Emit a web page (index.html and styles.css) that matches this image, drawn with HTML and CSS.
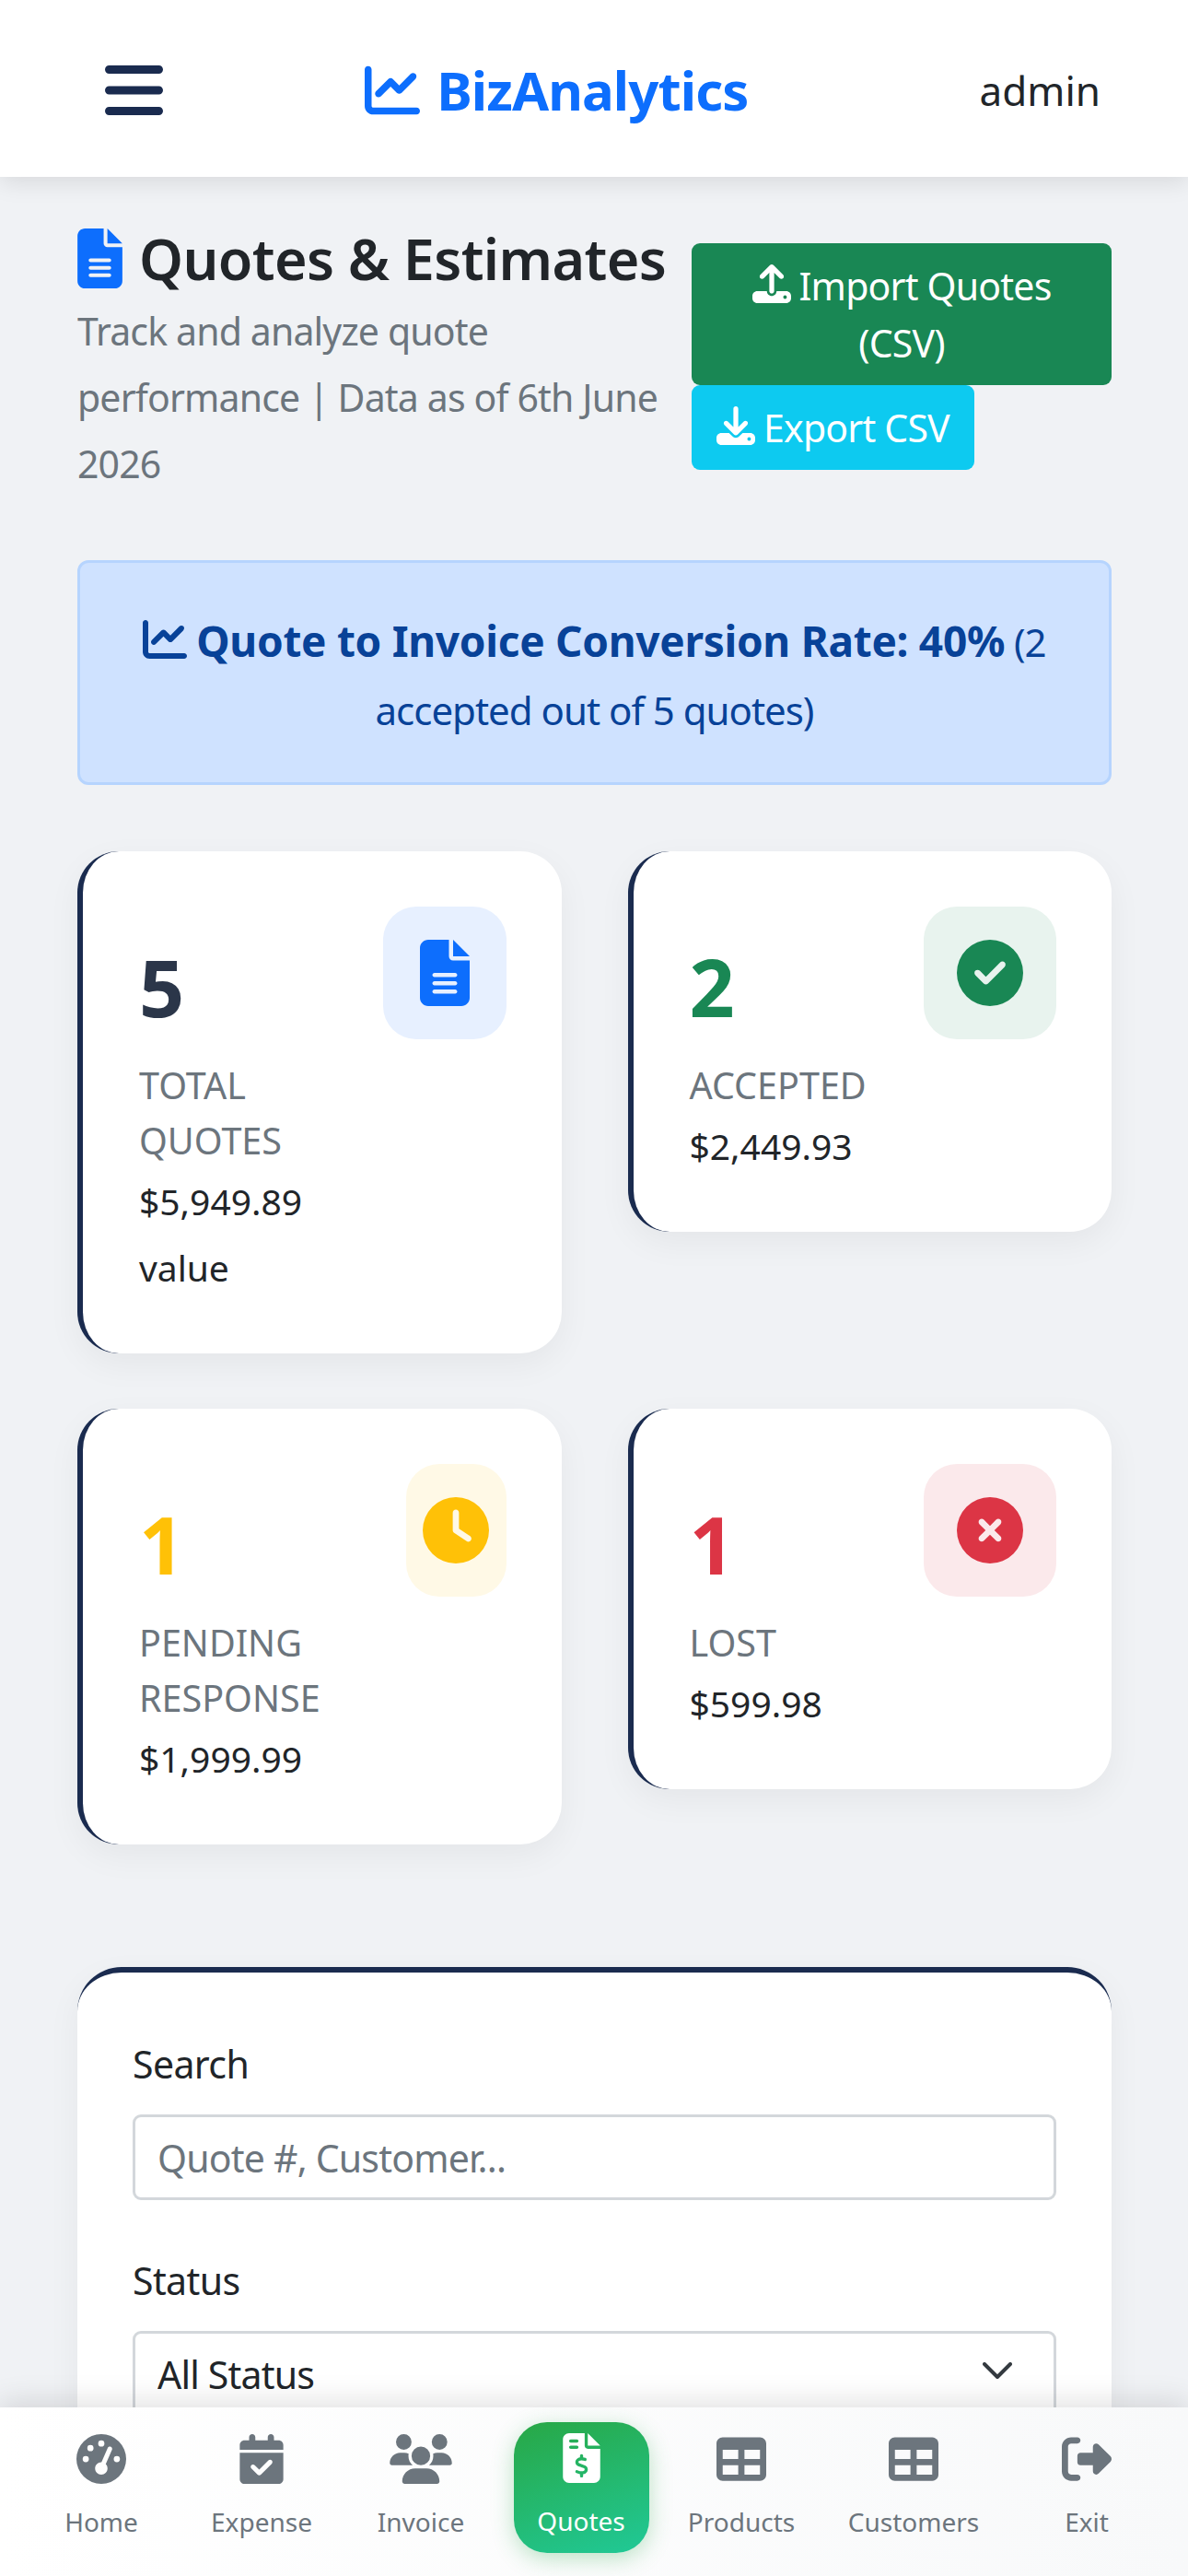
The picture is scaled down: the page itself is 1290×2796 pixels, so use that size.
FILE: index.html
```html
<!DOCTYPE html>
<html lang="en">
<head>
  <meta charset="UTF-8" />
  <meta name="viewport" content="width=device-width, initial-scale=1.0"/>
  <title>Quotes &amp; Estimates - BizAnalytics</title>
  <link rel="stylesheet" href="styles.css">
</head>
<body>
  <svg class="icon-defs" aria-hidden="true">
    <symbol id="i-bars" viewBox="0 0 448 512"><path d="M0 96C0 78.3 14.3 64 32 64H416c17.7 0 32 14.3 32 32s-14.3 32-32 32H32C14.3 128 0 113.7 0 96zM0 256c0-17.7 14.3-32 32-32H416c17.7 0 32 14.3 32 32s-14.3 32-32 32H32c-17.7 0-32-14.3-32-32zM448 416c0 17.7-14.3 32-32 32H32c-17.7 0-32-14.3-32-32s14.3-32 32-32H416c17.7 0 32 14.3 32 32z"/></symbol>
    <symbol id="i-chart" viewBox="0 0 512 512"><path d="M64 64c0-17.7-14.3-32-32-32S0 46.3 0 64V400c0 44.2 35.8 80 80 80H480c17.7 0 32-14.3 32-32s-14.3-32-32-32H80c-8.8 0-16-7.2-16-16V64zm406.6 86.6c12.5-12.5 12.5-32.8 0-45.3s-32.8-12.5-45.3 0L320 210.7l-57.4-57.4c-12.5-12.5-32.8-12.5-45.3 0l-112 112c-12.5 12.5-12.5 32.8 0 45.3s32.8 12.5 45.3 0L240 221.3l57.4 57.4c12.5 12.5 32.8 12.5 45.3 0l128-128z"/></symbol>
    <symbol id="i-file" viewBox="0 0 384 512"><path d="M64 0C28.7 0 0 28.7 0 64V448c0 35.3 28.7 64 64 64H320c35.3 0 64-28.7 64-64V160H256c-17.7 0-32-14.3-32-32V0H64zM256 0V128H384L256 0zM112 256H272c8.8 0 16 7.2 16 16s-7.2 16-16 16H112c-8.8 0-16-7.2-16-16s7.2-16 16-16zm0 64H272c8.8 0 16 7.2 16 16s-7.2 16-16 16H112c-8.8 0-16-7.2-16-16s7.2-16 16-16zm0 64H272c8.8 0 16 7.2 16 16s-7.2 16-16 16H112c-8.8 0-16-7.2-16-16s7.2-16 16-16z"/></symbol>
    <symbol id="i-upload" viewBox="0 0 512 512"><path d="M288 109.3V352c0 17.7-14.3 32-32 32s-32-14.3-32-32V109.3l-73.4 73.4c-12.5 12.5-32.8 12.5-45.3 0s-12.5-32.8 0-45.3l128-128c12.5-12.5 32.8-12.5 45.3 0l128 128c12.5 12.5 12.5 32.8 0 45.3s-32.8 12.5-45.3 0L288 109.3zM64 352H192c0 35.3 28.7 64 64 64s64-28.7 64-64H448c35.3 0 64 28.7 64 64v32c0 35.3-28.7 64-64 64H64c-35.3 0-64-28.7-64-64V416c0-35.3 28.7-64 64-64zM432 456a24 24 0 1 0 0-48 24 24 0 1 0 0 48z"/></symbol>
    <symbol id="i-download" viewBox="0 0 512 512"><path d="M288 32c0-17.7-14.3-32-32-32s-32 14.3-32 32V274.7l-73.4-73.4c-12.5-12.5-32.8-12.5-45.3 0s-12.5 32.8 0 45.3l128 128c12.5 12.5 32.8 12.5 45.3 0l128-128c12.5-12.5 12.5-32.8 0-45.3s-32.8-12.5-45.3 0L288 274.7V32zM64 352c-35.3 0-64 28.7-64 64v32c0 35.3 28.7 64 64 64H448c35.3 0 64-28.7 64-64V416c0-35.3-28.7-64-64-64H346.5l-45.3 45.3c-25 25-65.5 25-90.5 0L165.5 352H64zm368 56a24 24 0 1 1 0 48 24 24 0 1 1 0-48z"/></symbol>
    <symbol id="i-check" viewBox="0 0 512 512"><path d="M256 512A256 256 0 1 0 256 0a256 256 0 1 0 0 512zM369 209L241 337c-9.4 9.4-24.6 9.4-33.9 0l-64-64c-9.4-9.4-9.4-24.6 0-33.9s24.6-9.4 33.9 0l47 47L335 175c9.4-9.4 24.6-9.4 33.9 0s9.4 24.6 0 33.9z"/></symbol>
    <symbol id="i-clock" viewBox="0 0 512 512"><path d="M256 0a256 256 0 1 1 0 512A256 256 0 1 1 256 0zM232 120V256c0 8 4 15.5 10.7 20l96 64c11 7.4 25.9 4.4 33.3-6.7s4.4-25.9-6.7-33.3L280 243.2V120c0-13.3-10.7-24-24-24s-24 10.7-24 24z"/></symbol>
    <symbol id="i-xmark" viewBox="0 0 512 512"><path d="M256 512A256 256 0 1 0 256 0a256 256 0 1 0 0 512zM175 175c9.4-9.4 24.6-9.4 33.9 0l47 47 47-47c9.4-9.4 24.6-9.4 33.9 0s9.4 24.6 0 33.9l-47 47 47 47c9.4 9.4 9.4 24.6 0 33.9s-24.6 9.4-33.9 0l-47-47-47 47c-9.4 9.4-24.6 9.4-33.9 0s-9.4-24.6 0-33.9l47-47-47-47c-9.4-9.4-9.4-24.6 0-33.9z"/></symbol>
    <symbol id="i-gauge" viewBox="0 0 512 512"><path d="M0 256a256 256 0 1 1 512 0A256 256 0 1 1 0 256zM288 96a32 32 0 1 0 -64 0 32 32 0 1 0 64 0zM256 416c35.3 0 64-28.7 64-64c0-17.4-6.9-33.1-18.1-44.6L366 161.7c5.3-12.1-.2-26.3-12.3-31.6s-26.3 .2-31.6 12.3L257.9 288c-.6 0-1.3 0-1.9 0c-35.3 0-64 28.7-64 64s28.7 64 64 64zM176 144a32 32 0 1 0 -64 0 32 32 0 1 0 64 0zM96 288a32 32 0 1 0 0-64 32 32 0 1 0 0 64zm352-32a32 32 0 1 0 -64 0 32 32 0 1 0 64 0z"/></symbol>
    <symbol id="i-calendar" viewBox="0 0 448 512"><path d="M128 0c17.7 0 32 14.3 32 32V64H288V32c0-17.7 14.3-32 32-32s32 14.3 32 32V64h48c26.5 0 48 21.5 48 48v48H0V112C0 85.5 21.5 64 48 64H96V32c0-17.7 14.3-32 32-32zM0 192H448V464c0 26.5-21.5 48-48 48H48c-26.5 0-48-21.5-48-48V192zM329 305c9.4-9.4 9.4-24.6 0-33.9s-24.6-9.4-33.9 0l-95 95-47-47c-9.4-9.4-24.6-9.4-33.9 0s-9.4 24.6 0 33.9l64 64c9.4 9.4 24.6 9.4 33.9 0L329 305z"/></symbol>
    <symbol id="i-users" viewBox="0 0 640 512"><path d="M144 0a80 80 0 1 1 0 160A80 80 0 1 1 144 0zM512 0a80 80 0 1 1 0 160A80 80 0 1 1 512 0zM0 298.7C0 239.8 47.8 192 106.7 192h42.7c15.9 0 31 3.5 44.6 9.7c-1.3 7.2-1.9 14.7-1.9 22.3c0 38.2 16.8 72.5 43.3 96c-.2 0-.4 0-.7 0H21.3C9.6 320 0 310.4 0 298.7zM405.3 320c-.2 0-.4 0-.7 0c26.6-23.5 43.3-57.8 43.3-96c0-7.6-.7-15-1.9-22.3c13.6-6.3 28.7-9.7 44.6-9.7h42.7C592.2 192 640 239.8 640 298.7c0 11.8-9.6 21.3-21.3 21.3H405.3zM224 224a96 96 0 1 1 192 0 96 96 0 1 1 -192 0zM128 485.3C128 411.7 187.7 352 261.3 352H378.7C452.3 352 512 411.7 512 485.3c0 14.7-11.9 26.7-26.7 26.7H154.7c-14.7 0-26.7-11.9-26.7-26.7z"/></symbol>
    <symbol id="i-invoice" viewBox="0 0 384 512"><path d="M64 0C28.7 0 0 28.7 0 64V448c0 35.3 28.7 64 64 64H320c35.3 0 64-28.7 64-64V160H256c-17.7 0-32-14.3-32-32V0H64zM256 0V128H384L256 0zM64 80c0-8.8 7.2-16 16-16h64c8.8 0 16 7.2 16 16s-7.2 16-16 16H80c-8.8 0-16-7.2-16-16zm0 64c0-8.8 7.2-16 16-16h64c8.8 0 16 7.2 16 16s-7.2 16-16 16H80c-8.8 0-16-7.2-16-16zm128 72c8.8 0 16 7.2 16 16v17.3c8.5 1.2 16.7 3.1 24.1 5.1c8.5 2.3 13.6 11 11.3 19.6s-11 13.6-19.6 11.3c-11.1-3-22-5.2-32.1-5.3c-8.4-.1-17.4 1.8-23.6 5.5c-5.7 3.4-8.1 7.3-8.1 12.8c0 3.7 1.3 6.5 7.3 10.1c6.9 4.1 16.6 7.1 29.2 10.9l.5 .1 0 0 0 0c11.3 3.4 25.3 7.6 36.3 14.6c12.1 7.6 22.4 19.7 22.7 38.2c.3 19.3-9.6 33.3-22.9 41.6c-7.7 4.8-16.4 7.6-25.1 9.1V440c0 8.8-7.2 16-16 16s-16-7.2-16-16V422.2c-11.2-2.1-21.7-5.7-30.9-8.9l0 0c-2.1-.7-4.2-1.4-6.2-2.1c-8.4-2.8-12.9-11.9-10.1-20.2s11.9-12.9 20.2-10.1c2.5 .8 4.8 1.6 7.1 2.4l0 0 0 0 0 0c13.6 4.6 24.6 8.4 36.3 8.7c9.1 .3 17.9-1.7 23.7-5.3c5.1-3.2 7.9-7.3 7.8-14c-.1-4.6-1.8-7.8-7.7-11.6c-6.8-4.3-16.5-7.4-29-11.2l-1.6-.5 0 0c-11-3.3-24.3-7.3-34.8-13.7c-12-7.2-22.6-18.9-22.7-37.3c-.1-19.4 10.8-32.8 23.8-40.5c7.5-4.4 15.8-7.2 24.1-8.7V232c0-8.8 7.2-16 16-16z"/></symbol>
    <symbol id="i-table" viewBox="0 0 512 512"><path d="M64 256V160H224v96H64zm0 64H224v96H64V320zm224 96V320H448v96H288zM448 256H288V160H448v96zM64 32C28.7 32 0 60.7 0 96V416c0 35.3 28.7 64 64 64H448c35.3 0 64-28.7 64-64V96c0-35.3-28.7-64-64-64H64z"/></symbol>
    <symbol id="i-exit" viewBox="0 0 512 512"><path d="M377.9 105.9L500.7 228.7c7.2 7.2 11.3 17.1 11.3 27.3s-4.1 20.1-11.3 27.3L377.9 406.1c-6.4 6.4-15 9.9-24 9.9c-18.7 0-33.9-15.2-33.9-33.9l0-62.1-128 0c-17.7 0-32-14.3-32-32l0-64c0-17.7 14.3-32 32-32l128 0 0-62.1c0-18.7 15.2-33.9 33.9-33.9c9 0 17.6 3.6 24 9.9zM160 96L96 96c-17.7 0-32 14.3-32 32l0 256c0 17.7 14.3 32 32 32l64 0c17.7 0 32 14.3 32 32s-14.3 32-32 32l-64 0c-53 0-96-43-96-96L0 128C0 75 43 32 96 32l64 0c17.7 0 32 14.3 32 32s-14.3 32-32 32z"/></symbol>
  </svg>

  <header class="topbar">
    <button class="menu-btn" aria-label="Menu"><svg class="icon-menu"><use href="#i-bars"/></svg></button>
    <div class="brand"><svg class="icon-brand"><use href="#i-chart"/></svg>BizAnalytics</div>
    <div class="user">admin</div>
  </header>

  <main class="content">
    <section class="page-head">
      <div class="head-text">
        <h1 class="page-title"><svg class="icon-title"><use href="#i-file"/></svg>Quotes &amp; Estimates</h1>
        <p class="page-sub">Track and analyze quote performance | Data as of 6th June 2026</p>
      </div>
      <div class="head-actions">
        <a class="btn btn-green"><svg class="icon-btn"><use href="#i-upload"/></svg>Import Quotes (CSV)</a>
        <a class="btn btn-cyan"><svg class="icon-btn"><use href="#i-download"/></svg>Export CSV</a>
      </div>
    </section>

    <div class="rate-alert">
      <svg class="icon-alert"><use href="#i-chart"/></svg>
      <strong>Quote to Invoice Conversion Rate: 40%</strong> (2 accepted out of 5 quotes)
    </div>

    <section class="stats">
      <div class="stat-card">
        <div class="stat-text">
          <div class="stat-num num-dark">5</div>
          <div class="stat-label">Total Quotes</div>
          <div class="stat-value">$5,949.89 value</div>
        </div>
        <div class="stat-icon tint-blue"><svg class="icon-doc"><use href="#i-file"/></svg></div>
      </div>
      <div class="stat-card">
        <div class="stat-text">
          <div class="stat-num num-green">2</div>
          <div class="stat-label">Accepted</div>
          <div class="stat-value">$2,449.93</div>
        </div>
        <div class="stat-icon tint-green"><svg class="icon-round"><use href="#i-check"/></svg></div>
      </div>
      <div class="stat-card">
        <div class="stat-text">
          <div class="stat-num num-yellow">1</div>
          <div class="stat-label">Pending Response</div>
          <div class="stat-value">$1,999.99</div>
        </div>
        <div class="stat-icon tint-yellow"><svg class="icon-round"><use href="#i-clock"/></svg></div>
      </div>
      <div class="stat-card">
        <div class="stat-text">
          <div class="stat-num num-red">1</div>
          <div class="stat-label">Lost</div>
          <div class="stat-value">$599.98</div>
        </div>
        <div class="stat-icon tint-red"><svg class="icon-round"><use href="#i-xmark"/></svg></div>
      </div>
    </section>

    <form class="filter-card">
      <label class="field-label" for="search">Search</label>
      <input class="field" id="search" type="text" placeholder="Quote #, Customer..." />
      <label class="field-label" for="status">Status</label>
      <select class="field field-select" id="status">
        <option>All Status</option>
      </select>
    </form>
  </main>

  <nav class="bottom-nav">
    <a class="nav-item"><svg class="icon-nav nav-w54"><use href="#i-gauge"/></svg>Home</a>
    <a class="nav-item"><svg class="icon-nav nav-w48"><use href="#i-calendar"/></svg>Expense</a>
    <a class="nav-item"><svg class="icon-nav nav-w68"><use href="#i-users"/></svg>Invoice</a>
    <a class="nav-item active"><svg class="icon-nav nav-w41"><use href="#i-invoice"/></svg>Quotes</a>
    <a class="nav-item"><svg class="icon-nav nav-w54"><use href="#i-table"/></svg>Products</a>
    <a class="nav-item"><svg class="icon-nav nav-w54"><use href="#i-table"/></svg>Customers</a>
    <a class="nav-item"><svg class="icon-nav nav-w54"><use href="#i-exit"/></svg>Exit</a>
  </nav>
</body>
</html>
```

FILE: styles.css
```css
* {
  margin: 0;
  padding: 0;
  box-sizing: border-box;
}

html, body {
  height: 100%;
  overflow: hidden;
}

body {
  display: flex;
  flex-direction: column;
  font-family: "Noto Sans", "Open Sans", sans-serif;
  font-size: 42px;
  line-height: 72px;
  color: #212529;
  background: #f0f2f5;
}

svg {
  fill: currentColor;
  flex-shrink: 0;
}

.icon-defs {
  display: none;
}

/* Top bar */
.topbar {
  flex: 0 0 192px;
  display: flex;
  align-items: center;
  justify-content: space-between;
  padding: 4px 95px 0 114px;
  background: #fff;
  box-shadow: 0 6px 24px rgba(0, 0, 0, 0.1);
  position: relative;
  z-index: 2;
}

.menu-btn {
  display: flex;
  background: none;
  border: none;
  color: #1a2b4f;
}

.icon-menu {
  width: 63px;
  height: 72px;
}

.brand {
  display: flex;
  align-items: center;
  gap: 18px;
  margin-right: 32px;
  font-size: 58px;
  font-weight: 700;
  letter-spacing: -0.9px;
  color: #0d6efd;
}

.icon-brand {
  width: 60px;
  height: 60px;
}

.user {
  font-size: 44px;
}

/* Page */
.content {
  flex: 1;
  min-height: 0;
  overflow: hidden;
  padding: 49px 83px 0 84px;
}

.page-head {
  display: flex;
  gap: 16px;
  height: 298px;
}

.head-text {
  flex: 1;
  min-width: 0;
}

.page-title {
  display: flex;
  align-items: center;
  gap: 18px;
  font-size: 61px;
  line-height: 79px;
  font-weight: 600;
  letter-spacing: -0.6px;
  white-space: nowrap;
}

.icon-title {
  width: 49px;
  height: 65px;
  color: #0d6efd;
}

.page-sub {
  margin-top: 3px;
  font-size: 41px;
  letter-spacing: -0.85px;
  color: #6c757d;
}

.head-actions {
  flex: 0 0 456px;
  display: flex;
  flex-direction: column;
  align-items: flex-start;
  padding-top: 23px;
}

.btn {
  display: block;
  padding: 15px 27px;
  font-size: 41px;
  letter-spacing: -0.8px;
  line-height: 62px;
  text-align: center;
  color: #fff;
  border-radius: 9px;
}

.btn-green {
  width: 100%;
  background: #198754;
}

.btn-cyan {
  background: #0dcaf0;
}

.icon-btn {
  width: 42px;
  height: 42px;
  margin-right: 9px;
  vertical-align: -3px;
}

.rate-alert {
  margin-top: 69px;
  padding: 47px 36px 41px;
  text-align: center;
  font-size: 42px;
  letter-spacing: -1px;
  line-height: 74px;
  color: #084298;
  background: #cfe2ff;
  border: 3px solid #b6d4fe;
  border-radius: 12px;
}

.rate-alert strong {
  font-size: 46px;
  letter-spacing: -0.3px;
}

.icon-alert {
  width: 48px;
  height: 48px;
  vertical-align: -5px;
}

/* Stat cards */
.stats {
  display: grid;
  grid-template-columns: 1fr 1fr;
  column-gap: 72px;
  row-gap: 60px;
  align-items: start;
  margin-top: 72px;
}

.stat-card {
  display: flex;
  justify-content: space-between;
  padding: 60px 60px 57px 61px;
  background: #fff;
  border-left: 6px solid #1a2b4f;
  border-radius: 45px;
  box-shadow: 0 12px 36px rgba(0, 0, 0, 0.05);
}

.stat-num {
  margin-top: 22px;
  font-size: 86px;
  line-height: 130px;
  font-weight: 700;
}

.num-dark { color: #2b3649; }
.num-green { color: #198754; }
.num-yellow { color: #ffc107; }
.num-red { color: #dc3545; }

.stat-label {
  margin-top: 12px;
  font-size: 39.5px;
  line-height: 60px;
  text-transform: uppercase;
  color: #6c757d;
}

.stat-value {
  font-size: 39px;
}

.stat-icon {
  flex: 0 1 144px;
  height: 144px;
  display: flex;
  align-items: center;
  justify-content: center;
  border-radius: 36px;
}

.tint-blue { background: #e7f0ff; color: #0d6efd; }
.tint-green { background: #e8f3ee; color: #198754; }
.tint-yellow { background: #fff9e6; color: #ffc107; }
.tint-red { background: #fbe9eb; color: #dc3545; }

.icon-doc {
  width: 54px;
  height: 72px;
}

.icon-round {
  width: 72px;
  height: 72px;
}

/* Filters */
.filter-card {
  margin-top: 133px;
  padding: 63px 60px 60px;
  background: #fff;
  border-top: 6px solid #1a2b4f;
  border-radius: 48px;
  box-shadow: 0 12px 36px rgba(0, 0, 0, 0.05);
}

.field-label {
  display: block;
  margin-bottom: 19px;
  font-size: 41px;
  letter-spacing: -0.6px;
}

.field {
  display: block;
  width: 100%;
  height: 93px;
  margin-bottom: 51px;
  padding: 0 24px;
  font-family: inherit;
  font-size: 41px;
  letter-spacing: -0.8px;
  color: #212529;
  background: #fff;
  border: 3px solid #d3d7db;
  border-radius: 9px;
}

.field::placeholder {
  color: #6c757d;
}

.field-select {
  appearance: none;
  background-image: url("data:image/svg+xml,%3Csvg xmlns='http://www.w3.org/2000/svg' viewBox='0 0 32 18'%3E%3Cpath d='M2 2l14 14L30 2' fill='none' stroke='%23343a40' stroke-width='4' stroke-linecap='round' stroke-linejoin='round'/%3E%3C/svg%3E");
  background-repeat: no-repeat;
  background-position: right 45px top 31px;
  background-size: 32px 18px;
}

/* Bottom nav */
.bottom-nav {
  flex: 0 0 183px;
  display: grid;
  grid-template-columns: 172px 176px 170px 178px 170px 204px 172px;
  padding: 0 24px 9px;
  align-items: center;
  background: linear-gradient(to right, #fff, #f8f9fa);
  box-shadow: 0 -6px 30px rgba(0, 0, 0, 0.12);
  position: relative;
  z-index: 2;
}

.nav-item {
  display: flex;
  flex-direction: column;
  align-items: center;
  justify-self: center;
  width: 147px;
  white-space: nowrap;
  font-size: 28px;
  line-height: 44px;
  color: #6c757d;
}

.icon-nav {
  height: 54px;
  margin-bottom: 19px;
}

.nav-w54 { width: 54px; }
.nav-w48 { width: 48px; }
.nav-w68 { width: 68px; }
.nav-w41 { width: 41px; }

.nav-item.active {
  height: 142px;
  padding-top: 12px;
  color: #fff;
  background: linear-gradient(160deg, #28a745, #20c997);
  border-radius: 36px;
  box-shadow: 0 6px 24px rgba(40, 167, 69, 0.3);
}
```
